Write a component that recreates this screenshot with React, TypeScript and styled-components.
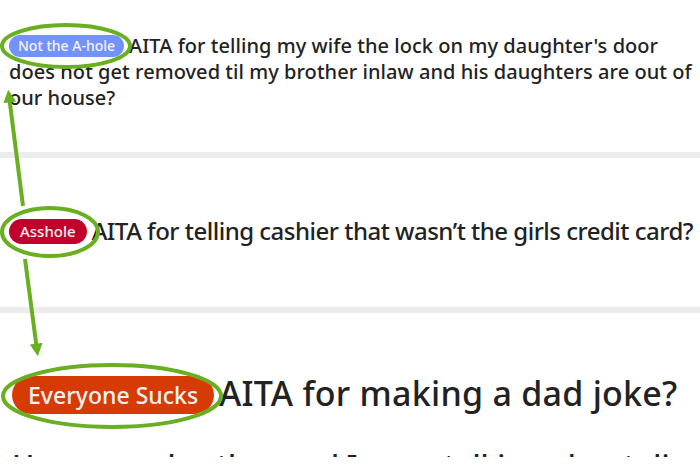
import React from "react";
import styled, { createGlobalStyle } from "styled-components";

const GlobalStyle = createGlobalStyle`
  html, body {
    margin: 0;
    padding: 0;
    background: #ffffff;
    overflow: hidden;
  }
  body {
    font-family: "Noto Sans", "Open Sans", Arial, sans-serif;
    color: #1c1c1c;
  }
`;

const Page = styled.div`
  position: relative;
  width: 700px;
  height: 465px;
  overflow: hidden;
  background: #ececec;
  display: flex;
  flex-direction: column;
  gap: 6px;
`;

const Post = styled.section<{ $height: number; $padTop: number; $padLeft?: number }>`
  background: #ffffff;
  height: ${(p) => p.$height}px;
  padding: ${(p) => p.$padTop}px 2px 0 ${(p) => p.$padLeft ?? 9}px;
  box-sizing: border-box;
  flex-shrink: 0;
  overflow: hidden;
`;

const Title = styled.h3<{ $size: number; $lineHeight: number; $tracking: number }>`
  margin: 0;
  font-size: ${(p) => p.$size}px;
  line-height: ${(p) => p.$lineHeight}px;
  font-weight: 500;
  letter-spacing: ${(p) => p.$tracking}px;
  color: #222222;
`;

const Flair = styled.span<{ $bg: string; $size: number; $h: number; $pad: number }>`
  display: inline-block;
  background: ${(p) => p.$bg};
  color: #f7f2f2;
  font-size: ${(p) => p.$size}px;
  font-weight: 500;
  letter-spacing: 0;
  height: ${(p) => p.$h}px;
  line-height: ${(p) => p.$h}px;
  padding: 0 ${(p) => p.$pad}px;
  border-radius: ${(p) => p.$h / 2}px;
  margin-right: 5px;
  vertical-align: middle;
  position: relative;
  top: -2px;
`;

/* post body preview, cut to a sliver at the fold */
const Teaser = styled.div`
  margin-top: 38px;
  height: 3px;
  overflow: hidden;
`;

const TeaserText = styled.p`
  margin: -3px 0 0 0;
  font-size: 30px;
  line-height: 30px;
  font-weight: 500;
  color: #222222;
  white-space: nowrap;
`;

const Marks = styled.svg`
  position: absolute;
  left: 0;
  top: 0;
  pointer-events: none;
`;

const GREEN = "#6aaf22";

const Annotations = () => (
  <Marks width={700} height={465} viewBox="0 0 700 465">
    <defs>
      <marker id="head" viewBox="0 0 10 10" refX="5" refY="5" markerWidth="3.2" markerHeight="3.2" orient="auto-start-reverse">
        <path d="M0 0 L10 5 L0 10 Z" fill={GREEN} />
      </marker>
    </defs>
    <g fill="none" stroke={GREEN} strokeWidth={4}>
      <ellipse cx={66} cy={46} rx={64} ry={21} />
      <ellipse cx={50} cy={232} rx={48} ry={24} />
      <ellipse cx={112} cy={396} rx={109} ry={31} />
      <line x1={23} y1={206} x2={9} y2={96} markerEnd="url(#head)" />
      <line x1={25} y1={259} x2={37} y2={350} markerEnd="url(#head)" />
    </g>
  </Marks>
);

export default function App() {
  return (
    <>
      <GlobalStyle />
      <Page>
        <Post $height={152} $padTop={33}>
          <Title $size={20} $lineHeight={26} $tracking={0.05}>
            <Flair $bg="#7293fb" $size={14} $h={22} $pad={9}>
              Not the A-hole
            </Flair>
            AITA for telling my wife the lock on my daughter's door does not get removed til my brother inlaw and his daughters are out of our house?
          </Title>
        </Post>
        <Post $height={149} $padTop={58}>
          <Title $size={24} $lineHeight={30} $tracking={-0.5}>
            <Flair $bg="#c2002c" $size={15} $h={25} $pad={11}>
              Asshole
            </Flair>
            AITA for telling cashier that wasn’t the girls credit card?
          </Title>
        </Post>
        <Post $height={160} $padTop={60} $padLeft={12}>
          <Title $size={34} $lineHeight={40} $tracking={0.25}>
            <Flair $bg="#d63b05" $size={23} $h={38} $pad={16}>
              Everyone Sucks
            </Flair>
            AITA for making a dad joke?
          </Title>
          <Teaser>
            <TeaserText>Hey so my brother and I were talking about dinner plans</TeaserText>
          </Teaser>
        </Post>
      </Page>
      <Annotations />
    </>
  );
}
